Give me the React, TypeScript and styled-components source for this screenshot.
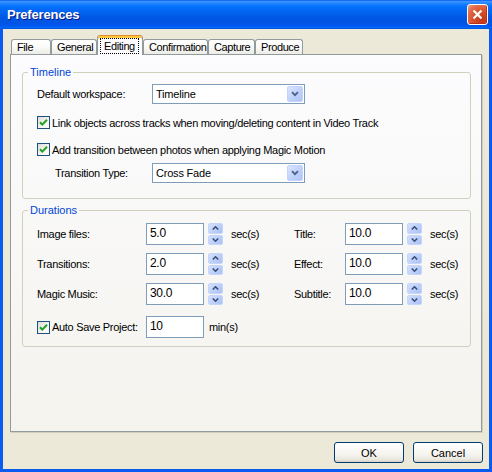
import React from 'react'
import styled, { createGlobalStyle } from 'styled-components'

const GlobalStyle = createGlobalStyle`
  html, body {
    margin: 0;
    padding: 0;
  }
  body {
    font-family: "Liberation Sans", Arial, sans-serif;
    font-size: 11px;
    color: #000;
    background: #fff;
  }
  * {
    box-sizing: border-box;
  }
`

const Window = styled.div`
  width: 492px;
  height: 472px;
  display: flex;
  flex-direction: column;
  background: #ece9d8;
`

const TitleBar = styled.div`
  height: 29px;
  flex: none;
  display: flex;
  align-items: center;
  justify-content: space-between;
  padding: 0 4px 0 7px;
  background: linear-gradient(
    180deg,
    #0058ee 0%,
    #3a93ff 5%,
    #2a88ff 10%,
    #127dff 16%,
    #036ffc 24%,
    #0262ee 44%,
    #0057e5 60%,
    #0054e3 76%,
    #0055eb 86%,
    #005bf5 92%,
    #026afe 94%,
    #0062ef 96%,
    #0052d6 100%
  );
`

const Title = styled.span`
  font-family: "Liberation Sans", Arial, sans-serif;
  font-size: 13px;
  font-weight: bold;
  color: #fff;
  text-shadow: 1px 1px 0 #0a1883;
  letter-spacing: -0.2px;
`

const CloseButton = styled.button`
  width: 21px;
  height: 21px;
  padding: 0;
  border: 1px solid #fff;
  border-radius: 3px;
  display: flex;
  align-items: center;
  justify-content: center;
  background: radial-gradient(circle at 75% 80%, #c2351a 0%, #d9502a 45%, #e2704e 75%, #f0a48a 100%);
  box-shadow: inset -1px -1px 0 #b8301c;
`

const Body = styled.div`
  flex: 1;
  display: flex;
  flex-direction: column;
  padding: 6px 7px 6px 7px;
  border: 3px solid #0a5cf0;
  border-top: none;
`

const TabStrip = styled.div`
  height: 19px;
  flex: none;
  display: flex;
  align-items: flex-end;
  padding-left: 1px;
  position: relative;
  z-index: 1;
`

const Tab = styled.div<{ $w: number; $active?: boolean }>`
  width: ${({ $w }) => $w}px;
  height: ${({ $active }) => ($active ? 20 : 15)}px;
  margin-bottom: ${({ $active }) => ($active ? -1 : 0)}px;
  display: flex;
  align-items: center;
  justify-content: flex-start;
  padding: 0 0 ${({ $active }) => ($active ? 2 : 0)}px ${({ $active }) => ($active ? 2 : 5)}px;
  border: 1px solid #919b9c;
  border-bottom: none;
  border-radius: 3px 3px 0 0;
  background: ${({ $active }) =>
    $active ? '#fcfcfe' : 'linear-gradient(180deg, #ffffff 0%, #fafaf8 50%, #ecebe6 100%)'};
  ${({ $active }) =>
    $active &&
    `
    border-top: 1px solid #e68b2c;
    box-shadow: inset 0 2px 0 #ffc83c;
  `}
  white-space: nowrap;
  overflow: hidden;
  letter-spacing: -0.4px;
`

const FocusLabel = styled.span`
  border: 1px dotted #000;
  padding: 0 3px;
  line-height: 14px;
  margin-top: 3px;
`

const Panel = styled.div`
  flex: 1;
  border: 1px solid #919b9c;
  background: linear-gradient(180deg, #fcfcfe 0%, #f4f3ee 100%);
  box-shadow: 1px 1px 0 #d0cebf;
  padding: 11px 10px 0 11px;
  display: flex;
  flex-direction: column;
`

const Group = styled.fieldset<{ $top?: number }>`
  margin: ${({ $top = 0 }) => $top}px 0 0 0;
  padding: 0;
  min-width: 0;
  border: 1px solid #d0d0bf;
  border-radius: 3px;
`

const Legend = styled.legend`
  color: #0046d5;
  margin-left: 5px;
  padding: 0 2px;
  line-height: 13px;
  font-size: 11px;
`

const GroupBody = styled.div<{ $pad: string }>`
  padding: ${({ $pad }) => $pad};
  display: flex;
  flex-direction: column;
`

const Row = styled.div<{ $top?: number; $indent?: number; $h: number }>`
  display: flex;
  align-items: center;
  height: ${({ $h }) => $h}px;
  margin-top: ${({ $top = 0 }) => $top}px;
  padding-left: ${({ $indent = 0 }) => $indent}px;
  white-space: nowrap;
`

const Label = styled.span<{ $w?: number }>`
  width: ${({ $w }) => ($w ? `${$w}px` : 'auto')};
  flex: none;
  letter-spacing: -0.3px;
`

const SelectBox = styled.div`
  width: 153px;
  height: 20px;
  border: 1px solid #7f9db9;
  background: #fff;
  display: flex;
  align-items: center;
  justify-content: space-between;
  padding: 1px 1px 1px 3px;
  letter-spacing: -0.2px;
`

const DropButton = styled.div`
  width: 16px;
  height: 16px;
  border: 1px solid #c3d3fd;
  border-radius: 2px;
  background: linear-gradient(135deg, #dbe6fe 0%, #c1d3fb 50%, #aec5f6 100%);
  display: flex;
  align-items: center;
  justify-content: center;
`

const CheckBox = styled.span`
  width: 13px;
  height: 13px;
  flex: none;
  border: 1px solid #1c5180;
  background: linear-gradient(135deg, #dcdcd7 0%, #f6f6f4 60%, #ffffff 100%);
  display: flex;
  align-items: center;
  justify-content: center;
  margin-right: 2px;
`

const DurationGrid = styled.div`
  display: grid;
  grid-template-columns: 257px auto;
  row-gap: 8px;
`

const Field = styled.div`
  display: flex;
  align-items: center;
  height: 22px;
  white-space: nowrap;
`

const NumberBox = styled.div`
  width: 58px;
  height: 22px;
  flex: none;
  border: 1px solid #7f9db9;
  background: #fff;
  padding: 2px 3px 0;
  line-height: 14px;
  font-size: 12px;
  letter-spacing: -0.3px;
`

const Spinner = styled.div`
  width: 15px;
  height: 22px;
  margin-left: 4px;
  display: flex;
  flex-direction: column;
  gap: 1px;
`

const SpinHalf = styled.div`
  flex: 1;
  border-radius: 2px;
  border: 1px solid #c6d6fb;
  background: linear-gradient(135deg, #d4e1fd 0%, #bccffa 55%, #aac2f4 100%);
  display: flex;
  align-items: center;
  justify-content: center;
`

const Unit = styled.span<{ $gap?: number }>`
  margin-left: ${({ $gap = 8 }) => $gap}px;
  letter-spacing: -0.3px;
`

const Footer = styled.div`
  flex: none;
  display: flex;
  justify-content: flex-end;
  gap: 9px;
  margin: 10px -1px 0 0;
`

const Button = styled.button`
  width: 70px;
  height: 21px;
  padding: 0;
  border: 1px solid #003c74;
  border-radius: 3px;
  background: linear-gradient(180deg, #ffffff 0%, #f5f4ef 60%, #e8e6dd 88%, #d6d0c5 100%);
  font-family: "Liberation Sans", Arial, sans-serif;
  font-size: 11px;
  color: #000;
`

const Chevron = () => (
  <svg width="8" height="6" viewBox="0 0 8 6">
    <path d="M1 1.2 L4 4.2 L7 1.2" fill="none" stroke="#4d6185" strokeWidth="1.8" />
  </svg>
)

const Arrow = ({ up }: { up?: boolean }) => (
  <svg width="7" height="4" viewBox="0 0 7 4">
    <path
      d={up ? 'M0.8 3.5 L3.5 0.8 L6.2 3.5' : 'M0.8 0.5 L3.5 3.2 L6.2 0.5'}
      fill="none"
      stroke="#3d5178"
      strokeWidth="1.6"
    />
  </svg>
)

const Check = () => (
  <svg width="9" height="9" viewBox="0 0 9 9">
    <path d="M1 4.2 L3.3 6.6 L8 1.8" fill="none" stroke="#21a121" strokeWidth="2" />
  </svg>
)

const Select = ({ value }: { value: string }) => (
  <SelectBox>
    <span>{value}</span>
    <DropButton>
      <Chevron />
    </DropButton>
  </SelectBox>
)

const Duration = ({ label, labelWidth, value }: { label: string; labelWidth: number; value: string }) => (
  <Field>
    <Label $w={labelWidth}>{label}</Label>
    <NumberBox>{value}</NumberBox>
    <Spinner>
      <SpinHalf>
        <Arrow up />
      </SpinHalf>
      <SpinHalf>
        <Arrow />
      </SpinHalf>
    </Spinner>
    <Unit>sec(s)</Unit>
  </Field>
)

const tabs = [
  { name: 'File', w: 40 },
  { name: 'General', w: 46 },
  { name: 'Editing', w: 46, active: true },
  { name: 'Confirmation', w: 65 },
  { name: 'Capture', w: 47 },
  { name: 'Produce', w: 48 },
]

const durations = [
  ['Image files:', '5.0', 'Title:', '10.0'],
  ['Transitions:', '2.0', 'Effect:', '10.0'],
  ['Magic Music:', '30.0', 'Subtitle:', '10.0'],
]

export default function App() {
  return (
    <>
      <GlobalStyle />
      <Window>
        <TitleBar>
          <Title>Preferences</Title>
          <CloseButton aria-label="Close">
            <svg width="11" height="11" viewBox="0 0 11 11">
              <path d="M1.5 1.5 L9.5 9.5 M9.5 1.5 L1.5 9.5" stroke="#fff" strokeWidth="2.2" />
            </svg>
          </CloseButton>
        </TitleBar>
        <Body>
          <TabStrip>
            {tabs.map((t) => (
              <Tab key={t.name} $w={t.w} $active={t.active}>
                {t.active ? <FocusLabel>{t.name}</FocusLabel> : t.name}
              </Tab>
            ))}
          </TabStrip>
          <Panel>
            <Group>
              <Legend>Timeline</Legend>
              <GroupBody $pad="5px 0 15px 14px">
                <Row $h={20}>
                  <Label $w={115}>Default workspace:</Label>
                  <Select value="Timeline" />
                </Row>
                <Row $h={13} $top={12}>
                  <CheckBox>
                    <Check />
                  </CheckBox>
                  <Label>Link objects across tracks when moving/deleting content in Video Track</Label>
                </Row>
                <Row $h={13} $top={14}>
                  <CheckBox>
                    <Check />
                  </CheckBox>
                  <Label>Add transition between photos when applying Magic Motion</Label>
                </Row>
                <Row $h={20} $top={7} $indent={18}>
                  <Label $w={97}>Transition Type:</Label>
                  <Select value="Cross Fade" />
                </Row>
              </GroupBody>
            </Group>
            <Group $top={5}>
              <Legend>Durations</Legend>
              <GroupBody $pad="6px 0 8px 14px">
                <DurationGrid>
                  {durations.map(([l1, v1, l2, v2]) => (
                    <React.Fragment key={l1}>
                      <Duration label={l1} labelWidth={109} value={v1} />
                      <Duration label={l2} labelWidth={51} value={v2} />
                    </React.Fragment>
                  ))}
                </DurationGrid>
                <Row $h={22} $top={11}>
                  <CheckBox>
                    <Check />
                  </CheckBox>
                  <Label $w={94}>Auto Save Project:</Label>
                  <NumberBox>10</NumberBox>
                  <Unit $gap={5}>min(s)</Unit>
                </Row>
              </GroupBody>
            </Group>
          </Panel>
          <Footer>
            <Button>OK</Button>
            <Button>Cancel</Button>
          </Footer>
        </Body>
      </Window>
    </>
  )
}
